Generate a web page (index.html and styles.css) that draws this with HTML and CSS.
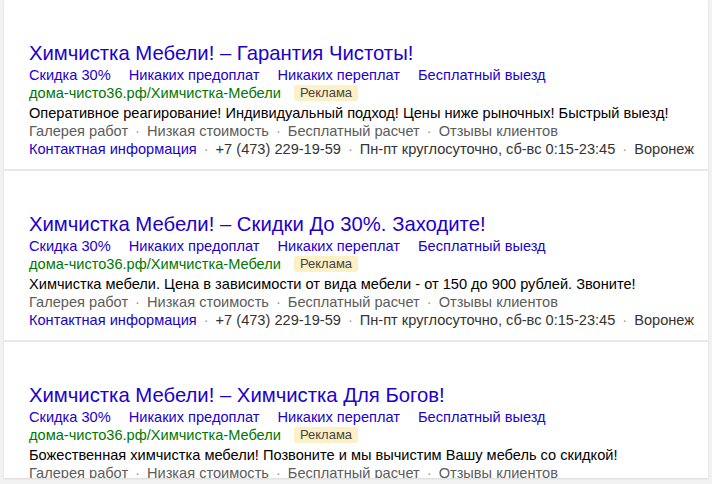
FILE: index.html
```html
<!DOCTYPE html>
<html lang="ru">
<head>
<meta charset="utf-8">
<link rel="stylesheet" href="styles.css">
</head>
<body>
<div class="panel">
  <div class="ad">
    <a class="title">Химчистка Мебели! – Гарантия Чистоты!</a>
    <div class="sitelinks"><a>Скидка 30%</a><a>Никаких предоплат</a><a>Никаких переплат</a><a>Бесплатный выезд</a></div>
    <div class="urlrow"><span class="url">дома-чисто36.рф/Химчистка-Мебели</span><span class="badge">Реклама</span></div>
    <div class="text">Оперативное реагирование! Индивидуальный подход! Цены ниже рыночных! Быстрый выезд!</div>
    <div class="extra">Галерея работ<span class="dot">·</span>Низкая стоимость<span class="dot">·</span>Бесплатный расчет<span class="dot">·</span>Отзывы клиентов</div>
    <div class="contacts"><a>Контактная информация</a><span class="dot">·</span>+7 (473) 229-19-59<span class="dot">·</span>Пн-пт круглосуточно, сб-вс 0:15-23:45<span class="dot">·</span>Воронеж</div>
  </div>
  <div class="ad">
    <a class="title">Химчистка Мебели! – Скидки До 30%. Заходите!</a>
    <div class="sitelinks"><a>Скидка 30%</a><a>Никаких предоплат</a><a>Никаких переплат</a><a>Бесплатный выезд</a></div>
    <div class="urlrow"><span class="url">дома-чисто36.рф/Химчистка-Мебели</span><span class="badge">Реклама</span></div>
    <div class="text">Химчистка мебели. Цена в зависимости от вида мебели - от 150 до 900 рублей. Звоните!</div>
    <div class="extra">Галерея работ<span class="dot">·</span>Низкая стоимость<span class="dot">·</span>Бесплатный расчет<span class="dot">·</span>Отзывы клиентов</div>
    <div class="contacts"><a>Контактная информация</a><span class="dot">·</span>+7 (473) 229-19-59<span class="dot">·</span>Пн-пт круглосуточно, сб-вс 0:15-23:45<span class="dot">·</span>Воронеж</div>
  </div>
  <div class="ad">
    <a class="title">Химчистка Мебели! – Химчистка Для Богов!</a>
    <div class="sitelinks"><a>Скидка 30%</a><a>Никаких предоплат</a><a>Никаких переплат</a><a>Бесплатный выезд</a></div>
    <div class="urlrow"><span class="url">дома-чисто36.рф/Химчистка-Мебели</span><span class="badge">Реклама</span></div>
    <div class="text">Божественная химчистка мебели! Позвоните и мы вычистим Вашу мебель со скидкой!</div>
    <div class="extra">Галерея работ<span class="dot">·</span>Низкая стоимость<span class="dot">·</span>Бесплатный расчет<span class="dot">·</span>Отзывы клиентов</div>
    <div class="contacts"><a>Контактная информация</a><span class="dot">·</span>+7 (473) 229-19-59<span class="dot">·</span>Пн-пт круглосуточно, сб-вс 0:15-23:45<span class="dot">·</span>Воронеж</div>
  </div>
</div>
</body>
</html>
```

FILE: styles.css
```css
html, body {
  margin: 0;
  padding: 0;
  background: #f2f2f2;
  height: 100%;
  overflow: hidden;
}
body {
  font-family: "Liberation Sans", Arial, sans-serif;
  color: #000;
}
.panel {
  margin: 0 4px;
  background: #fff;
  height: 478px;
  overflow: hidden;
  box-shadow: 0 1px 2px rgba(0,0,0,0.1);
}
.ad {
  height: 169px;
  padding: 0 0 0 25px;
  border-bottom: 2px solid #e8e8e8;
  display: flex;
  flex-direction: column;
  white-space: nowrap;
}
.title {
  margin-top: 42px;
  font-size: 20.3px;
  line-height: 22px;
  color: #2200cc;
}
.sitelinks {
  margin-top: 2px;
  display: flex;
  gap: 18px;
  font-size: 14.6px;
  line-height: 18px;
  color: #2200cc;
}
.urlrow {
  display: flex;
  align-items: center;
  gap: 13px;
  font-size: 14.6px;
  line-height: 18px;
  height: 18px;
}
.url { color: #007700; }
.badge {
  background: #fcf1c6;
  color: #444;
  border-radius: 3px;
  padding: 0 6px;
  font-size: 13px;
  line-height: 16px;
}
.text {
  font-size: 14.6px;
  line-height: 18px;
  margin-top: 2px;
  color: #000;
}
.extra {
  font-size: 14.6px;
  line-height: 18px;
  color: #5c5c5c;
}
.contacts {
  font-size: 14.6px;
  line-height: 18px;
  color: #333;
}
.contacts a { color: #2200cc; }
.dot {
  color: #999;
  padding: 0 7px;
}
```
